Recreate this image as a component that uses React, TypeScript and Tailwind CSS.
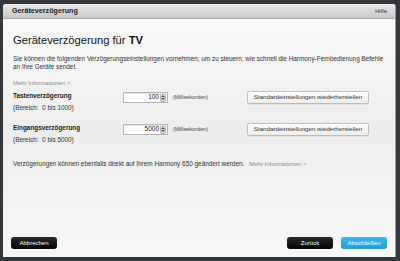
import React from 'react';

type DelayRowProps = {
  label: string;
  value: string;
  range: string;
};

const Spinner = () => (
  <div className="flex flex-col w-[6px] h-[8px] border border-[#b8b8b8] rounded-[1px] bg-gradient-to-b from-[#f4f4f4] to-[#d6d6d6] overflow-hidden">
    <div className="flex-1 flex items-center justify-center border-b border-[#c4c4c4]">
      <svg width="4" height="2" viewBox="0 0 4 2">
        <path d="M0 2 L2 0 L4 2 Z" fill="#555" />
      </svg>
    </div>
    <div className="flex-1 flex items-center justify-center">
      <svg width="4" height="2" viewBox="0 0 4 2">
        <path d="M0 0 L2 2 L4 0 Z" fill="#555" />
      </svg>
    </div>
  </div>
);

const DelayRow: React.FC<DelayRowProps> = ({ label, value, range }) => (
  <div className="flex items-start h-[32px]">
    {/* Label + range */}
    <div className="w-[110px] flex flex-col">
      <p className="text-[6.4px] leading-[9px] font-bold text-[#222]">{label}</p>
      <p className="mt-[4px] text-[6.4px] leading-[8px] text-[#333] whitespace-pre">{range}</p>
    </div>

    {/* Number input */}
    <div className="mt-[1px] w-[45px] h-[11px] bg-white border border-[#b5b5b5] shadow-[inset_0_1px_1px_rgba(0,0,0,0.12)] flex items-center justify-end pr-[1px] gap-[1px]">
      <span className="text-[6.5px] leading-none text-[#111]">{value}</span>
      <Spinner />
    </div>
    <span className="ml-[5px] mt-[3px] text-[5.2px] leading-[7px] text-[#444]">(Millisekunden)</span>

    {/* Reset button */}
    <button className="ml-auto mr-[16px] w-[122px] h-[13px] rounded-[2px] border border-[#bdbdbd] bg-gradient-to-b from-white to-[#ececec] shadow-[0_1px_0_rgba(0,0,0,0.05)] text-[6.2px] leading-none text-[#333] flex items-center justify-center">
      Standardeinstellungen wiederherstellen
    </button>
  </div>
);

export default function App() {
  return (
    <div className="w-[400px] h-[261px] bg-[#34373b] pt-[4px] pl-[3px] pr-[4px] font-['Liberation_Sans',Arial,sans-serif] overflow-hidden">
      <div className="h-[253px] flex flex-col rounded-t-[3px] overflow-hidden bg-gradient-to-b from-[#fbfbfb] via-[#ededed] to-[#f7f7f7] border-r border-[#9a9a9a]">
        {/* Title bar */}
        <div className="h-[15px] shrink-0 flex items-center justify-between pl-[9px] pr-[8px] bg-gradient-to-b from-[#ededed] to-[#c6c6c6] border-b border-[#a8a8a8]">
          <span className="text-[7.2px] font-bold text-[#222]">Geräteverzögerung</span>
          <span className="text-[6px] text-[#333]">Hilfe</span>
        </div>

        {/* Body */}
        <div className="flex-1 flex flex-col px-[10px]">
          <h1 className="mt-[14px] text-[11.2px] leading-[14px] text-[#111]">
            Geräteverzögerung für <span className="font-bold">TV</span>
          </h1>

          <p className="mt-[8px] text-[6.4px] leading-[8px] text-[#333] whitespace-nowrap">
            Sie können die folgenden Verzögerungseinstellungen vornehmen, um zu steuern, wie schnell die Harmony-Fernbedienung Befehle
            <br />
            an Ihre Geräte sendet.
          </p>

          <p className="mt-[8px] mb-[4px] text-[6px] leading-[8px] text-[#8a8a8a]">Mehr Informationen &gt;</p>

          <DelayRow label="Tastenverzögerung" value="100" range="(Bereich:  0 bis 1000)" />
          <DelayRow label="Eingangsverzögerung" value="5000" range="(Bereich:  0 bis 5000)" />

          <p className="mt-[5px] text-[6.4px] leading-[8px] text-[#333]">
            Verzögerungen können ebenfalls direkt auf Ihrem Harmony 650 geändert werden.
            <span className="ml-[5px] text-[6px] text-[#8a8a8a]">Mehr Informationen &gt;</span>
          </p>
        </div>

        {/* Footer buttons */}
        <div className="shrink-0 flex items-center px-[8px] pb-[8px]">
          <button className="w-[46px] h-[12px] rounded-[3px] bg-gradient-to-b from-[#2a2a2a] to-[#050505] text-white text-[6px] leading-none flex items-center justify-center">
            Abbrechen
          </button>
          <div className="ml-auto flex gap-[8px]">
            <button className="w-[46px] h-[12px] rounded-[3px] bg-gradient-to-b from-[#2a2a2a] to-[#050505] text-white text-[6px] leading-none flex items-center justify-center">
              Zurück
            </button>
            <button className="w-[46px] h-[12px] rounded-[3px] bg-gradient-to-b from-[#3bb6ee] to-[#1e9fdd] text-white text-[6px] leading-none flex items-center justify-center">
              Abschließen
            </button>
          </div>
        </div>
      </div>
    </div>
  );
}
